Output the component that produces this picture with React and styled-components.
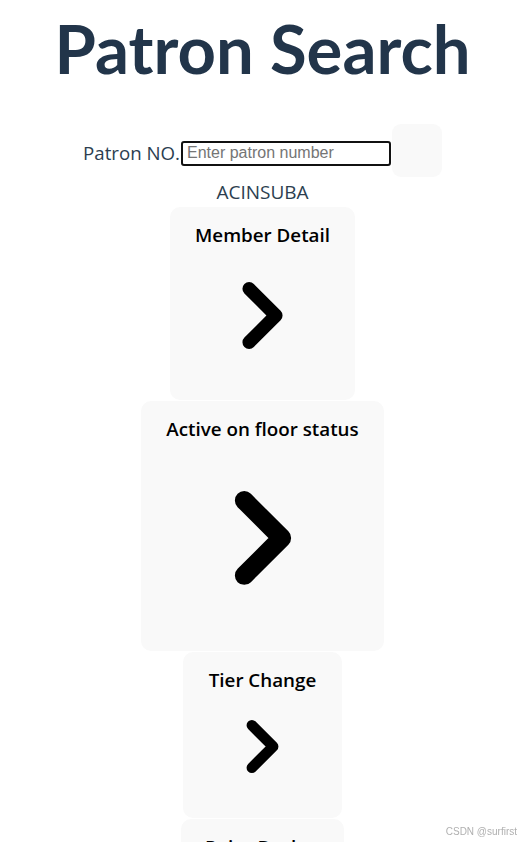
import styled, { createGlobalStyle } from "styled-components";
import { ChevronRight } from "lucide-react";

const GlobalStyle = createGlobalStyle`
  body {
    margin: 0 0 0 3px;
    background: #ffffff;
    font-family: "Open Sans", "Noto Sans", sans-serif;
  }
`;

// each card is sized like the original page rendered it
const cards = [
  { title: "Member Detail", width: 185, height: 193, icon: 107 },
  { title: "Active on floor status", width: 243, height: 250, icon: 150 },
  { title: "Tier Change", width: 159, height: 166, icon: 85 },
  { title: "Point Bucket", width: 163, height: 166, icon: 85 },
];

function App() {
  return (
    <Page>
      <GlobalStyle />
      <Heading>Patron Search</Heading>
      <SearchRow>
        <Label htmlFor="patron">Patron NO.</Label>
        <Input id="patron" placeholder="Enter patron number" />
        <SearchButton type="button" />
      </SearchRow>
      <Casino>ACINSUBA</Casino>
      <CardList>
        {cards.map((card) => (
          <Card key={card.title} $width={card.width} $height={card.height}>
            <CardTitle>{card.title}</CardTitle>
            <IconBox>
              <ChevronRight size={card.icon} strokeWidth={3} color="#000" />
            </IconBox>
          </Card>
        ))}
      </CardList>
      <Watermark>CSDN @surfirst</Watermark>
    </Page>
  );
}

const Page = styled.div`
  display: flex;
  flex-direction: column;
  align-items: center;
  color: #2c3e50;
`;

const Heading = styled.h1`
  margin: 8px 0 0;
  font-family: Lato, "Open Sans", sans-serif;
  font-weight: 700;
  font-size: 67px;
  line-height: 80px;
  color: #22354a;
`;

const SearchRow = styled.div`
  display: flex;
  align-items: center;
  margin-top: 36px;
`;

const Label = styled.label`
  font-size: 18.7px;
  line-height: 25px;
  margin-top: 4px;
`;

const Input = styled.input`
  box-sizing: border-box;
  width: 210px;
  height: 25px;
  margin: 5px 1px 0;
  padding: 0 4px;
  border: 2px solid #111;
  border-radius: 3px;
  font-family: "Liberation Sans", Arial, sans-serif;
  font-size: 16px;
  outline: none;

  &::placeholder {
    color: #757575;
  }
`;

const SearchButton = styled.button`
  width: 50px;
  height: 53px;
  border: none;
  border-radius: 9px;
  background: #f9f9f9;
`;

const Casino = styled.div`
  font-size: 19px;
  line-height: 25px;
  margin-top: 3px;
`;

const CardList = styled.div`
  display: flex;
  flex-direction: column;
  align-items: center;
  gap: 1px;
  margin-top: 2px;
`;

const Card = styled.div`
  box-sizing: border-box;
  width: ${(p) => p.$width}px;
  height: ${(p) => p.$height}px;
  padding: 16px 0 18px;
  display: flex;
  flex-direction: column;
  align-items: center;
  flex-shrink: 0;
  background: #f9f9f9;
  border-radius: 10px;
`;

const CardTitle = styled.h3`
  margin: 0;
  font-size: 18.8px;
  font-weight: 600;
  line-height: 25px;
  color: #000;
  white-space: nowrap;
`;

const IconBox = styled.div`
  flex: 1;
  display: flex;
  align-items: center;
  justify-content: center;
`;

const Watermark = styled.span`
  position: fixed;
  right: 5px;
  bottom: 5px;
  font-family: "Liberation Sans", Arial, sans-serif;
  font-size: 10px;
  color: #b0b0b0;
`;

export default App;
